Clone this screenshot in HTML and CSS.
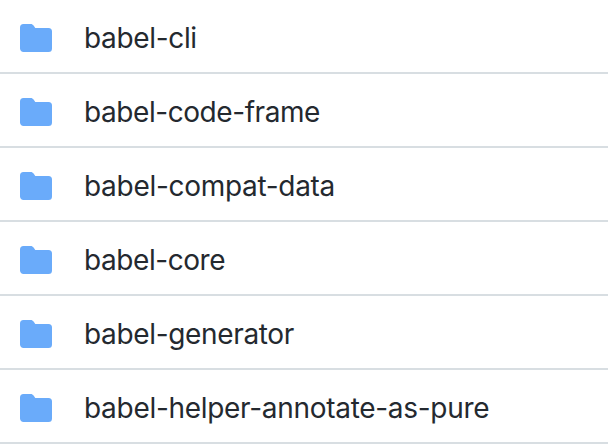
FILE: index.html
```html
<!DOCTYPE html>
<html lang="en">
<head>
<meta charset="utf-8">
<title>packages</title>
<link rel="stylesheet" href="styles.css">
</head>
<body>
<svg class="sprite" aria-hidden="true"><symbol id="folder" viewBox="0 0 16 16"><path d="M1.75 1A1.75 1.75 0 0 0 0 2.75v10.5C0 14.216.784 15 1.75 15h12.5A1.75 1.75 0 0 0 16 13.25v-8.5A1.75 1.75 0 0 0 14.25 3H7.75a.25.25 0 0 1-.2-.1l-.75-1.1C6.45 1.28 5.95 1 5.4 1H1.75Z"/></symbol></svg>
<ul class="files">
<li class="row"><svg class="icon"><use href="#folder"/></svg><span class="name">babel-cli</span></li>
<li class="row"><svg class="icon"><use href="#folder"/></svg><span class="name snug">babel-code-frame</span></li>
<li class="row"><svg class="icon"><use href="#folder"/></svg><span class="name loose">babel-compat-data</span></li>
<li class="row"><svg class="icon"><use href="#folder"/></svg><span class="name snug">babel-core</span></li>
<li class="row"><svg class="icon"><use href="#folder"/></svg><span class="name">babel-generator</span></li>
<li class="row"><svg class="icon"><use href="#folder"/></svg><span class="name loose">babel-helper-annotate-as-pure</span></li>
</ul>
</body>
</html>
```
FILE: styles.css
```css
body {
  margin: 0;
  background: #fff;
  color: #24292f;
  font: 28px/42px Inter, sans-serif;
  overflow: hidden;
}
.sprite {
  display: none;
}
.files {
  margin: 0;
  padding: 0;
  list-style: none;
}
.row {
  display: flex;
  align-items: center;
  gap: 32px;
  box-sizing: border-box;
  height: 74px;
  padding: 4px 20px 0;
  border-bottom: 2px solid #d8dee2;
}
.icon {
  width: 32px;
  height: 32px;
  flex: none;
  fill: #6aabfa;
}
.name {
  white-space: nowrap;
  letter-spacing: -0.34px;
}
.snug {
  letter-spacing: -0.43px;
}
.loose {
  letter-spacing: -0.3px;
}
```
